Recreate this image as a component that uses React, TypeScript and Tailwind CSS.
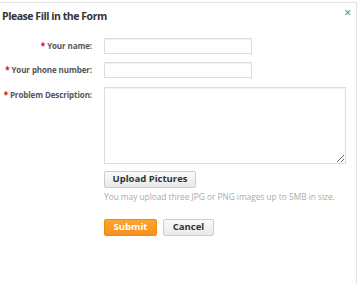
const Label = ({ text }: { text: string }) => (
    <label className="w-[92px] shrink-0 flex justify-end whitespace-nowrap text-[8px] font-bold text-[#555] leading-[16px] tracking-[-0.1px]">
        <span className="text-[#d0021b] mr-[2px]">*</span>{text}
    </label>
);

export default function App() {
    return (
        <div className="w-[360px] h-[284px] bg-white overflow-hidden font-['Open_Sans',sans-serif]">
            <div className="relative w-[357px] h-[300px] mt-[2px] border-t border-r border-[#e3e3e3] bg-white">
                <h2 className="pl-[2px] pt-[6px] text-[10.5px] font-bold text-[#333] leading-[14px] tracking-[-0.45px]">
                    Please Fill in the Form
                </h2>
                <button className="absolute right-[5px] top-[4px] text-[12px] leading-none text-[#666]">×</button>

                <form className="mt-[15px] flex flex-col">
                    <div className="flex items-start gap-[12px]">
                        <Label text="Your name:" />
                        <input type="text" className="block w-[148px] h-[16px] border border-[#ddd] shadow-[inset_0_1px_1px_rgba(0,0,0,0.06)]" />
                    </div>
                    <div className="flex items-start gap-[12px] mt-[8px]">
                        <Label text="Your phone number:" />
                        <input type="text" className="block w-[148px] h-[16px] border border-[#ddd] shadow-[inset_0_1px_1px_rgba(0,0,0,0.06)]" />
                    </div>
                    <div className="flex items-start gap-[12px] mt-[9px]">
                        <Label text="Problem Description:" />
                        <textarea className="block w-[242px] h-[77px] border border-[#ddd] shadow-[inset_0_1px_1px_rgba(0,0,0,0.06)]" />
                    </div>
                    <div className="pl-[104px] mt-[7px]">
                        <button type="button" className="block h-[17px] w-[92px] border border-[#ccc] rounded-[2px] bg-gradient-to-b from-[#fafafa] to-[#e9e9e9] text-[9.5px] font-bold text-[#333]">
                            Upload Pictures
                        </button>
                        <p className="mt-[3px] text-[8.3px] text-[#aaa] leading-[12px]">
                            You may upload three JPG or PNG images up to 5MB in size.
                        </p>
                        <div className="flex gap-[6px] mt-[16px]">
                            <button type="button" className="h-[17px] w-[53px] rounded-[2px] bg-gradient-to-b from-[#fba52e] to-[#f7901e] border border-[#f08a10] text-[9.5px] font-bold text-white">
                                Submit
                            </button>
                            <button type="button" className="h-[17px] w-[51px] border border-[#ccc] rounded-[2px] bg-gradient-to-b from-[#fafafa] to-[#e9e9e9] text-[9.5px] font-bold text-[#333]">
                                Cancel
                            </button>
                        </div>
                    </div>
                </form>
            </div>
        </div>
    );
}
